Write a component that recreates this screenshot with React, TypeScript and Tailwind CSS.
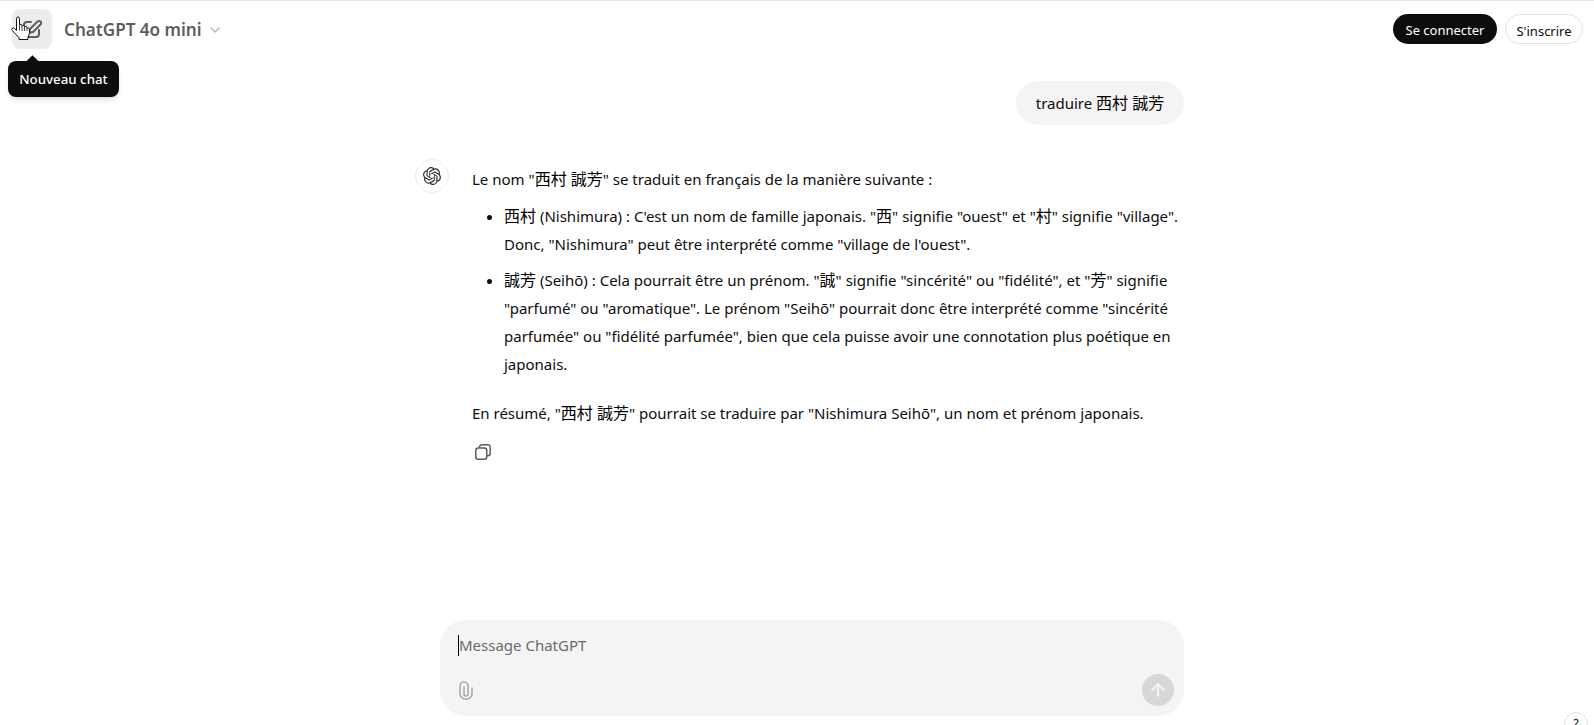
import { ChevronDown, ArrowUp } from 'lucide-react';
import { SiOpenai } from 'react-icons/si';

const ComposeIcon = () => (
  <svg width="24" height="24" viewBox="0 0 24 24" fill="none" stroke="currentColor" strokeWidth="2" strokeLinecap="round" strokeLinejoin="round">
    <path d="M11 5H7a3 3 0 0 0-3 3v9a3 3 0 0 0 3 3h9a3 3 0 0 0 3-3v-4" />
    <path d="M17.500 4.500a2.100 2.100 0 0 1 3 3L13 15l-4 1 1-4z" />
  </svg>
);

const HandCursor = () => (
  <svg width="20" height="25" viewBox="0 0 20 25" className="absolute left-[-1px] top-[7px]">
    <path
      d="M5.500 2.200c0-1.600 3-1.600 3 0v7c0-1 2.500-1 2.500 0v1c0-1 2.500-1 2.500 0v1c0-1 2.500-1 2.500 0v1.500c0-.8 2.500-.8 2.500.5v3c0 2-.7 3.500-1.500 4.800v2.500H8v-1.800L1 14.200c-1.100-1.400.8-3.200 2.200-1.900l2.300 2.200z"
      fill="#fff"
      stroke="#111"
      strokeWidth="1"
      strokeLinejoin="round"
    />
    <path d="M8.500 9.500v5M11 10.200v4.800M13.500 11.200v3.800M16 12.500v2.500" fill="none" stroke="#111" strokeWidth="0.8" />
  </svg>
);

const CopyIcon = () => (
  <svg width="16" height="16" viewBox="0 0 16 16" fill="none" stroke="currentColor" strokeWidth="1.500" strokeLinejoin="round">
    <rect x="0.750" y="4" width="11" height="11.200" rx="2.500" />
    <path d="M4.500 4V3a2.200 2.200 0 0 1 2.200-2.200h6.300A2.200 2.200 0 0 1 15.200 3v6.500a2.200 2.200 0 0 1-2.200 2.200h-1.200" />
  </svg>
);

const ClipIcon = () => (
  <svg width="14" height="19" viewBox="0 0 14 19" fill="none" stroke="currentColor" strokeWidth="1.600" strokeLinecap="round">
    <path d="M13 7v6a6 5.200 0 0 1-12 0V5a4 4 0 0 1 8 0v8a2 2 0 0 1-4 0V6" />
  </svg>
);

const Cjk = ({ children }: { children: string }) => <span className="text-[16px] text-black">{children}</span>;

const Header = () => (
  <header className="flex h-[56px] shrink-0 items-start justify-between pl-[12px] pr-[11px]">
    <div className="flex items-center pt-[8px]">
      <div className="relative flex h-[40px] w-[40px] items-center justify-center rounded-[8px] bg-[#ececec] text-[#5d5d5d]">
        <ComposeIcon />
        <HandCursor />
        <div className="absolute left-[-4px] top-[52px] z-10 h-[36px] w-[111px] whitespace-nowrap rounded-[8px] bg-[#0d0d0d] text-center text-[13.300px] font-medium leading-[36px] text-white shadow-md">
          <span className="absolute left-[20px] top-[-4px] h-[9px] w-[9px] rotate-45 bg-[#0d0d0d]" />
          Nouveau chat
        </div>
      </div>
      <div className="ml-[12px] mt-[2px] flex items-center gap-[5px] text-[17.100px] font-semibold text-[#5d5d5d]">
        ChatGPT 4o mini
        <ChevronDown size={16} className="text-[#b4b4b4]" />
      </div>
    </div>
    <div className="flex items-center gap-[8px] pt-[13px] text-[13px]">
      <button className="h-[30px] w-[104px] rounded-full bg-[#0d0d0d] pt-[2px] text-white">Se connecter</button>
      <button className="h-[30px] w-[78px] rounded-full border border-[#e3e3e3] bg-white pt-[2px] text-[#0d0d0d]">S'inscrire</button>
    </div>
  </header>
);

const App = () => (
  <div className="relative flex h-[725px] w-[1594px] flex-col overflow-hidden border-t border-[#e5e5e5] bg-white text-[15px] leading-[28px] text-[#0d0d0d] [font-family:'Noto_Sans','Noto_Sans_CJK_JP',sans-serif]">
    <Header />
    <main className="ml-[415px] flex w-[769px] flex-1 flex-col">
      <div className="mt-[24px] flex justify-end">
        <div className="w-[168px] whitespace-nowrap rounded-[22px] bg-[#f4f4f4] py-[8px] text-center">traduire <Cjk>西村 誠芳</Cjk></div>
      </div>
      <div className="mt-[34px] flex gap-[23px]">
        <div className="flex h-[34px] w-[34px] shrink-0 items-center justify-center rounded-full border border-[#ededed]">
          <SiOpenai size={18} className="text-[#2f2f2f]" />
        </div>
        <div className="min-w-0 flex-1 whitespace-nowrap pt-[6px]">
          <p>Le nom "<Cjk>西村 誠芳</Cjk>" se traduit en français de la manière suivante :</p>
          <ul className="mt-[9px] list-disc pl-[32px]">
            <li>
              <Cjk>西村</Cjk> (Nishimura) : C'est un nom de famille japonais. "<Cjk>西</Cjk>" signifie "ouest" et "<Cjk>村</Cjk>" signifie "village".<br />
              Donc, "Nishimura" peut être interprété comme "village de l'ouest".
            </li>
            <li className="mt-[8px]">
              <Cjk>誠芳</Cjk> (Seihō) : Cela pourrait être un prénom. "<Cjk>誠</Cjk>" signifie "sincérité" ou "fidélité", et "<Cjk>芳</Cjk>" signifie<br />
              "parfumé" ou "aromatique". Le prénom "Seihō" pourrait donc être interprété comme "sincérité<br />
              parfumée" ou "fidélité parfumée", bien que cela puisse avoir une connotation plus poétique en<br />
              japonais.
            </li>
          </ul>
          <p className="mt-[21px]">En résumé, "<Cjk>西村 誠芳</Cjk>" pourrait se traduire par "Nishimura Seihō", un nom et prénom japonais.</p>
          <div className="mt-[17px] pl-[3px] text-[#5d5d5d]">
            <CopyIcon />
          </div>
        </div>
      </div>
    </main>
    <div className="mb-[9px] ml-[440px] flex h-[96px] w-[744px] shrink-0 flex-col justify-between rounded-[26px] bg-[#f4f4f4] pb-[10px] pl-[18px] pr-[10px] pt-[15px]">
      <div className="w-fit border-l border-black leading-[21px] text-[#6b6b6b]">Message ChatGPT</div>
      <div className="flex items-center justify-between">
        <div className="ml-[1px] text-[#ababab]"><ClipIcon /></div>
        <div className="flex h-[32px] w-[32px] items-center justify-center rounded-full bg-[#d7d7d7] text-[#f4f4f4]">
          <ArrowUp size={20} strokeWidth={2.500} />
        </div>
      </div>
    </div>
    <div className="absolute left-[1564px] top-[711px] h-[24px] w-[24px] rounded-full border border-[#e3e3e3] text-center text-[12px] leading-[22px] text-[#0d0d0d]">?</div>
  </div>
);

export default App;
